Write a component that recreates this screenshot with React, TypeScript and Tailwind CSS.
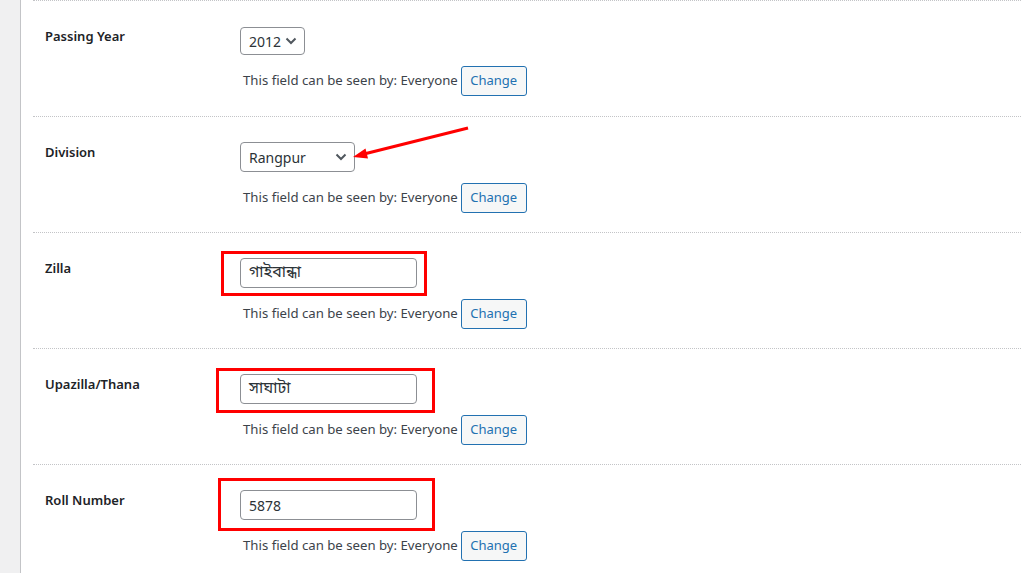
import React from 'react';

const FONT = { fontFamily: '"Noto Sans", "Open Sans", sans-serif' };
const BN = { fontFamily: '"Noto Sans Bengali", "Noto Sans", "Lohit Bengali", "FreeSans", sans-serif' };

const Chevron = () => (
  <svg width="12" height="8" viewBox="0 0 12 8" className="shrink-0">
    <path d="M1.5 1.5 L6 6 L10.5 1.5" fill="none" stroke="#50575e" strokeWidth="2" />
  </svg>
);

const Select = ({ value, width, height }: { value: string; width: string; height: string }) => (
  <div
    className={`flex items-center justify-between ${width} ${height} border border-[#8c8f94] rounded-[4px] bg-white pl-[8px] pr-[7px] text-[14px] text-[#2c3338]`}
  >
    <span>{value}</span>
    <Chevron />
  </div>
);

const Input = ({ value, bengali }: { value: string; bengali?: boolean }) => (
  <div
    className={`flex items-center w-[177px] h-[30px] border border-[#8c8f94] rounded-[4px] bg-white px-[8px] text-[#2c3338] ${bengali ? 'text-[16px]' : 'text-[14px]'}`}
    style={bengali ? BN : undefined}
  >
    {value}
  </div>
);

const Visibility = () => (
  <div className="flex items-center h-[30px] mt-[11px] pl-[3px] gap-[3px]">
    <span className="text-[13.2px] text-[#3c434a]">This field can be seen by: Everyone</span>
    <button className="h-[30px] px-[8.5px] border border-[#2271b1] rounded-[3px] bg-[#f6f7f7] text-[13px] text-[#2271b1]">
      Change
    </button>
  </div>
);

const Row = ({ label, children }: { label: string; children: React.ReactNode }) => (
  <div className="flex h-[116px] border-t border-dotted border-[#c3c4c7] pl-[12px] pt-[25px]">
    <div className="w-[195px] pt-[1px] text-[13px] leading-[18px] font-semibold text-[#1d2327]">{label}</div>
    <div className="flex flex-col">
      {children}
      <Visibility />
    </div>
  </div>
);

export default function App() {
  return (
    <div className="relative flex w-[1021px] h-[573px] overflow-hidden bg-white" style={FONT}>
      <div className="w-[21px] shrink-0 bg-[#f0f0f1] border-r border-[#c3c4c7]" />
      <div className="flex-1 pl-[12px]">
        <Row label="Passing Year">
          <div className="pt-[1px]">
            <Select value="2012" width="w-[65px]" height="h-[28px]" />
          </div>
        </Row>
        <Row label="Division">
          <Select value="Rangpur" width="w-[115px]" height="h-[30px]" />
        </Row>
        <Row label="Zilla">
          <Input value="গাইবান্ধা" bengali />
        </Row>
        <Row label="Upazilla/Thana">
          <Input value="সাঘাটা" bengali />
        </Row>
        <Row label="Roll Number">
          <Input value="5878" />
        </Row>
      </div>

      {/* annotation overlays */}
      <div className="absolute left-[221px] top-[251px] w-[206px] h-[45px] border-[3px] border-[#ff0000]" />
      <div className="absolute left-[216px] top-[368px] w-[219px] h-[45px] border-[3px] border-[#ff0000]" />
      <div className="absolute left-[218px] top-[478px] w-[217px] h-[53px] border-[3px] border-[#ff0000]" />
      <svg className="absolute left-0 top-0 pointer-events-none" width="1021" height="573">
        <line x1="468" y1="128" x2="364" y2="154" stroke="#ff0000" strokeWidth="3" />
        <polygon points="353,157 368,158.5 365.5,148.5" fill="#ff0000" />
      </svg>
    </div>
  );
}
